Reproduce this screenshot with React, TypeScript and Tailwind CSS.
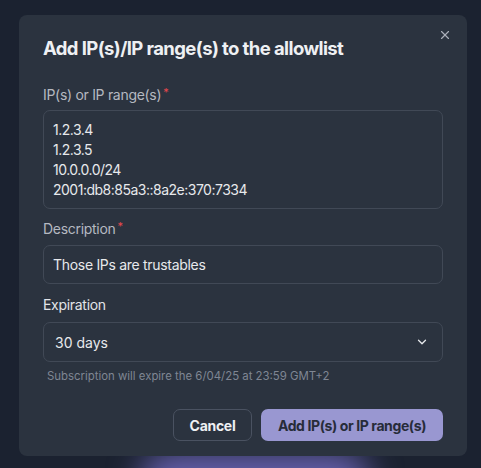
import { X, ChevronDown } from "lucide-react"

const font = { fontFamily: "Inter, 'Noto Sans', sans-serif" }

function Label({ text, required, className = "" }: { text: string; required?: boolean; className?: string }) {
  return (
    <div className={`flex items-start text-[14px] leading-5 tracking-[-0.3px] ${className}`}>
      <span>{text}</span>
      {required && <span className="ml-[2px] text-[#e5484d] text-[11px] leading-[14px]">*</span>}
    </div>
  )
}

export default function App() {
  return (
    <div className="relative h-[468px] w-[481px] overflow-hidden bg-[#1b2230]" style={font}>
      <div className="absolute left-[140px] top-[452px] h-[60px] w-[230px] rounded-full bg-[#6660ad] blur-[16px]" />
      <div className="relative ml-[19px] mt-[15px] w-[448px] h-[441px] rounded-[8px] bg-[#2b333f] px-6 pt-[19px]">
        <button className="absolute right-[15px] top-[13px] text-[#a9afb8]">
          <X size={14} strokeWidth={2} />
        </button>
        <h2 className="text-[18.5px] font-bold leading-7 text-[#eef0f3] tracking-[-0.6px]">
          Add IP(s)/IP range(s) to the allowlist
        </h2>

        <Label text="IP(s) or IP range(s)" required className="mt-[23px] text-[#b5b9c1]" />
        <div className="mt-[5px] h-[99px] rounded-[7px] border border-[#414956] px-[9px] pt-[9px] text-[14px] leading-5 text-[#e7e9ec] tracking-[-0.5px]">
          <div>1.2.3.4</div>
          <div>1.2.3.5</div>
          <div>10.0.0.0/24</div>
          <div>2001:db8:85a3::8a2e:370:7334</div>
        </div>

        <Label text="Description" required className="mt-[10px] text-[#b5b9c1]" />
        <div className="mt-[6px] flex h-[39px] items-center rounded-[7px] border border-[#414956] px-[9px] text-[14px] tracking-[-0.3px] text-[#e7e9ec]">
          Those IPs are trustables
        </div>

        <Label text="Expiration" className="mt-[11px] text-[#e2e4e8]" />
        <div className="mt-[7px] flex h-[40px] items-center justify-between rounded-[7px] border border-[#414956] pl-[11px] pr-[13px] text-[14px] text-[#e7e9ec]">
          <span>30 days</span>
          <ChevronDown size={14} strokeWidth={2.2} className="text-[#e7e9ec]" />
        </div>
        <div className="mt-[6px] pl-[4px] text-[11.4px] leading-4 text-[#7f8693]">
          Subscription will expire the 6/04/25 at 23:59 GMT+2
        </div>

        <div className="mt-[25px] flex justify-end gap-[9px]">
          <button className="h-[32px] w-[79px] rounded-[7px] border border-[#4a5261] text-[14px] font-bold tracking-[-0.3px] text-[#eef0f3]">
            Cancel
          </button>
          <button className="h-[32px] w-[182px] rounded-[7px] bg-[#9997d1] text-[14px] font-bold tracking-[-0.4px] text-[#272c39]">
            Add IP(s) or IP range(s)
          </button>
        </div>
      </div>
    </div>
  )
}
